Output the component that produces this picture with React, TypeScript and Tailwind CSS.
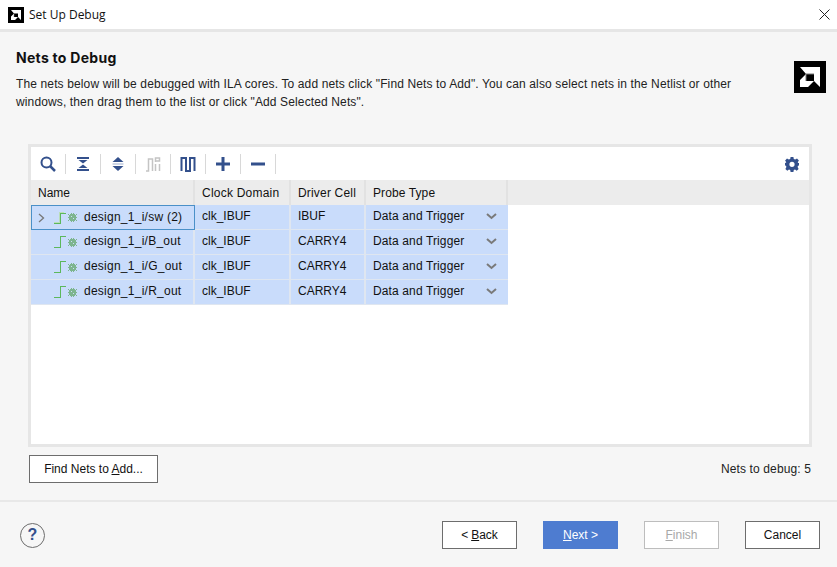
import React from 'react';

const rows = [
  { name: 'design_1_i/sw', count: ' (2)', domain: 'clk_IBUF', cell: 'IBUF', group: true },
  { name: 'design_1_i/B_out', count: '', domain: 'clk_IBUF', cell: 'CARRY4', group: false },
  { name: 'design_1_i/G_out', count: '', domain: 'clk_IBUF', cell: 'CARRY4', group: false },
  { name: 'design_1_i/R_out', count: '', domain: 'clk_IBUF', cell: 'CARRY4', group: false },
];

function AmdLogo({ size }: { size: number }) {
  return (
    <svg width={size} height={size} viewBox="0 0 32 32" className="shrink-0">
      <rect width="32" height="32" fill="#000" />
      <path d="M6 6 H26 V26 L20 20 V13 H12 Z" fill="#fff" />
      <path d="M12 13 L6 19 V26 H14 L20 20 H12 Z" fill="#fff" />
      <path d="M12 20 V13 H20" fill="none" stroke="#777" strokeWidth="1" />
    </svg>
  );
}

function ToolButton({ children }: { children: React.ReactNode }) {
  return (
    <>
      <div className="w-[34px] h-full flex items-center justify-center">{children}</div>
      <div className="w-px h-[20px] bg-[#d8d8d8]" />
    </>
  );
}

function Toolbar() {
  return (
    <div className="h-[33px] shrink-0 bg-white flex items-center pr-[9px]">
      <ToolButton>
        <svg width="16" height="16" viewBox="0 0 16 16" fill="none" stroke="#33508c" strokeWidth="2">
          <circle cx="6.5" cy="6.5" r="5" />
          <path d="M10 10 L15 15" strokeWidth="2.5" />
        </svg>
      </ToolButton>
      <ToolButton>
        <svg width="14" height="16" viewBox="0 0 14 16" fill="#33508c">
          <rect x="1" y="1" width="12" height="2" />
          <path d="M2.5 4 H11.5 L7 7.5 Z" />
          <path d="M7 8.5 L11.5 12 H2.5 Z" />
          <rect x="1" y="13" width="12" height="2" />
        </svg>
      </ToolButton>
      <ToolButton>
        <svg width="14" height="16" viewBox="0 0 14 16" fill="#33508c">
          <path d="M7 1 L12.5 6 H1.5 Z" />
          <rect x="1.5" y="7.5" width="11" height="1" fill="#9fb0d0" />
          <path d="M1.5 10 H12.5 L7 15 Z" />
        </svg>
      </ToolButton>
      <ToolButton>
        <svg width="15" height="16" viewBox="0 0 15 16" fill="none" stroke="#c4c4c4" strokeWidth="1.5">
          <path d="M0 15 H2.5 V3 H6.5 V15" />
          <path d="M9.5 15 V8 M13.5 15 V8 M9.5 6 V2 H13.5 V5 H9.5" />
        </svg>
      </ToolButton>
      <ToolButton>
        <svg width="16" height="16" viewBox="0 0 16 16" fill="none" stroke="#33508c" strokeWidth="2">
          <path d="M1.5 15 V2 H6 V15 H10 V2 H14.5 V15" />
        </svg>
      </ToolButton>
      <ToolButton>
        <svg width="16" height="16" viewBox="0 0 16 16" fill="#33508c">
          <rect x="1" y="6.5" width="14" height="3" />
          <rect x="6.5" y="1" width="3" height="14" />
        </svg>
      </ToolButton>
      <ToolButton>
        <svg width="16" height="16" viewBox="0 0 16 16" fill="#33508c">
          <rect x="1" y="6.5" width="14" height="3" />
        </svg>
      </ToolButton>
      <div className="flex-1" />
      <svg width="16" height="16" viewBox="0 0 16 16" fill="#33508c">
        <path
          fillRule="evenodd"
          d="M6.6 1 H9.4 L9.8 3 L11.2 3.6 L13 2.5 L14.9 4.6 L13.7 6.2 L14.2 7 L15 7 V9.5 L14 9.8 L13.6 11.1 L14.6 12.9 L12.7 14.7 L11 13.6 L9.8 14.1 L9.4 16 H6.6 L6.2 14.1 L5 13.6 L3.3 14.7 L1.4 12.9 L2.4 11.1 L2 9.8 L1 9.5 V7 L1.8 6.8 L2.3 6.2 L1.1 4.6 L3 2.5 L4.8 3.6 L6.2 3 Z M8 5.7 A2.6 2.6 0 1 0 8 10.9 A2.6 2.6 0 1 0 8 5.7 Z"
        />
      </svg>
    </div>
  );
}

function NetIcon({ group }: { group: boolean }) {
  return (
    <div className="flex items-center w-[30px] shrink-0">
      <svg width="13" height="12" viewBox="0 0 13 12" fill="none" shapeRendering="crispEdges">
        {group && <path d="M0 10.5 H5.5 V0.5 H10" stroke="#b9deb9" strokeWidth="1" />}
        <path d={group ? 'M0 11.5 H6.5 V1.5 H12' : 'M0 11.5 H6.5 V0.5 H12'} stroke="#5cb85c" strokeWidth="1" />
      </svg>
      <svg width="9" height="9" viewBox="0 0 9 9" fill="#7db58f" className="ml-[1px]" shapeRendering="crispEdges">
        <path d="M2 1 H7 V2 H8 V7 H7 V8 H2 V7 H1 V2 H2 Z M3 3 V4 H4 V3 Z M5 5 V6 H6 V5 Z" fillRule="evenodd" />
        <path d="M0 1 H1 V2 H0 Z M8 1 H9 V2 H8 Z M0 4 H1 V5 H0 Z M8 4 H9 V5 H8 Z M0 7 H1 V8 H0 Z M8 7 H9 V8 H8 Z M3 0 H4 V1 H3 Z M5 0 H6 V1 H5 Z M3 8 H4 V9 H3 Z M5 8 H6 V9 H5 Z" />
      </svg>
    </div>
  );
}

function NetsTable() {
  return (
    <div className="flex-1 flex flex-col bg-white text-[12px] text-[#111]">
      <div className="h-[25px] shrink-0 bg-[#ececec] flex items-center">
        <div className="w-[164px] pl-[7px] h-full flex items-center border-r-2 border-[#e2e2e2]">Name</div>
        <div className="w-[96px] pl-[7px] h-full flex items-center border-r-2 border-[#e2e2e2] tracking-[0.22px]">Clock Domain</div>
        <div className="w-[75px] pl-[7px] h-full flex items-center border-r-2 border-[#e2e2e2] tracking-[0.18px]">Driver Cell</div>
        <div className="w-[142px] pl-[7px] h-full flex items-center border-r-2 border-[#e2e2e2] tracking-[0.1px]">Probe Type</div>
      </div>
      {rows.map((row) => (
        <div key={row.name} className="h-[25px] w-[477px] flex bg-[#c9dcfb] border-b border-[#dfe6f0]">
          <div
            className={`w-[164px] shrink-0 flex items-center ${
              row.group ? 'border border-[#4a90c8] -mb-px' : 'border-r-2 border-[#dfe6f0]'
            }`}
          >
            <div className={`flex items-center justify-center shrink-0 ${row.group ? 'w-[22px] pr-[3px]' : 'w-[23px]'}`}>
              {row.group && (
                <svg width="7" height="10" viewBox="0 0 7 10" fill="none" stroke="#777" strokeWidth="1.3">
                  <path d="M1 1 L5.5 5 L1 9" />
                </svg>
              )}
            </div>
            <NetIcon group={row.group} />
            <span className="whitespace-nowrap tracking-[0.25px] pb-[2px]">
              {row.name}
              {row.count}
            </span>
          </div>
          <div className="w-[96px] shrink-0 pl-[7px] pb-[2px] flex items-center border-r-2 border-[#dfe6f0]">{row.domain}</div>
          <div className="w-[75px] shrink-0 pl-[7px] pb-[2px] flex items-center border-r-2 border-[#dfe6f0]">{row.cell}</div>
          <div className="w-[142px] shrink-0 pl-[7px] pr-[11px] pb-[2px] flex items-center justify-between">
            <span className="tracking-[0.125px]">Data and Trigger</span>
            <svg width="11" height="7" viewBox="0 0 11 7" fill="none" stroke="#7a7a7a" strokeWidth="2">
              <path d="M1 1 L5.5 5 L10 1" />
            </svg>
          </div>
        </div>
      ))}
    </div>
  );
}

function DialogButton({ children, variant = 'default' }: { children: React.ReactNode; variant?: string }) {
  const styles =
    variant === 'primary'
      ? 'bg-[#4e7cd0] text-white'
      : variant === 'disabled'
        ? 'bg-white border border-[#bdbdbd] text-[#a8a8a8]'
        : 'bg-white border border-[#6d6d6d] text-[#111]';
  return (
    <div className={`w-[75px] h-[28px] flex items-center justify-center text-[12px] ${styles}`}>{children}</div>
  );
}

export default function App() {
  return (
    <div className="w-[837px] h-[567px] flex flex-col bg-[#f6f6f6] overflow-hidden font-['Liberation_Sans',sans-serif]">
      <div className="h-[32px] shrink-0 bg-white border-b-[3px] border-[#e6e6e6] flex items-center pl-[8px] pr-[7px]">
        <AmdLogo size={16} />
        <span className="ml-[5px] text-[12px] text-[#111] font-['Open_Sans',sans-serif]">Set Up Debug</span>
        <div className="flex-1" />
        <svg width="11" height="11" viewBox="0 0 11 11" stroke="#222" strokeWidth="1" fill="none">
          <path d="M0.5 0.5 L10.5 10.5 M10.5 0.5 L0.5 10.5" />
        </svg>
      </div>

      <div className="flex-1 flex flex-col pl-[16px] pr-[11px]">
        <div className="flex justify-between pt-[17px] h-[112px] shrink-0">
          <div>
            <h1 className="text-[14px] font-bold text-[#111] leading-[17px] tracking-[0.28px] font-['Inter',sans-serif]">Nets to Debug</h1>
            <p className="mt-[9px] text-[12px] leading-[18px] text-[#222] w-[770px] tracking-[0.128px]">
              The nets below will be debugged with ILA cores. To add nets click "Find Nets to Add". You can also select nets in the Netlist or other
              <br />
              windows, then drag them to the list or click "Add Selected Nets".
            </p>
          </div>
          <div className="mt-[12px]">
            <AmdLogo size={32} />
          </div>
        </div>

        <div className="ml-[12px] mr-[14px] h-[303px] shrink-0 border-[3px] border-[#e6e6e6] flex flex-col">
          <Toolbar />
          <NetsTable />
        </div>

        <div className="ml-[13px] mt-[8px] flex items-center justify-between pr-[15px] h-[28px] shrink-0">
          <div className="w-[129px] h-[28px] bg-white border border-[#6d6d6d] flex items-center justify-center text-[12px] text-[#111]">
            <span>
              Find Nets to <span className="underline">A</span>dd...
            </span>
          </div>
          <span className="text-[12px] text-[#222] tracking-[0.12px]">Nets to debug: 5</span>
        </div>
      </div>

      <div className="h-[67px] shrink-0 border-t-2 border-[#e8e8e8] flex items-center pl-[20px] pr-[17px] pt-[1px]">
        <div className="w-[25px] h-[25px] rounded-full border border-[#6d6d6d] flex items-center justify-center text-[16px] font-bold text-[#33508c]">
          ?
        </div>
        <div className="flex-1" />
        <div className="flex gap-[26px]">
          <DialogButton>
            &lt; <span className="underline ml-[3px]">B</span>ack
          </DialogButton>
          <DialogButton variant="primary">
            <span className="underline">N</span>ext &gt;
          </DialogButton>
          <DialogButton variant="disabled">
            <span className="underline">F</span>inish
          </DialogButton>
          <DialogButton>Cancel</DialogButton>
        </div>
      </div>
    </div>
  );
}
